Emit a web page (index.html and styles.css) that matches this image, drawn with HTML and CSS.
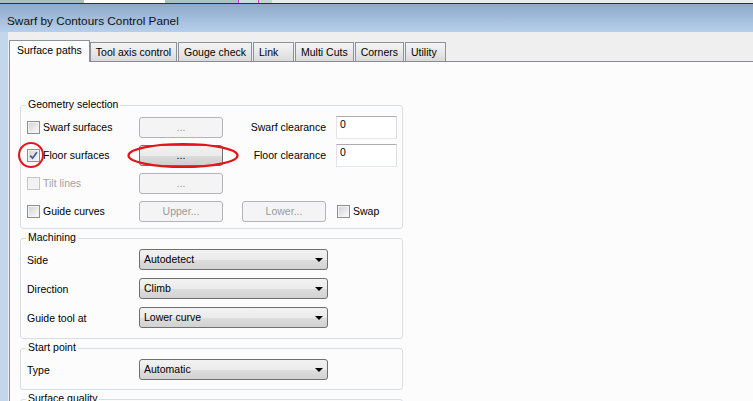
FILE: index.html
```html
<!DOCTYPE html>
<html lang="en">
<head>
  <meta charset="UTF-8">
  <meta name="viewport" content="width=device-width, initial-scale=1.0">
  <title>Swarf by Contours Control Panel</title>
  <link rel="stylesheet" href="styles.css">
</head>
<body>
  <div class="desktop-strip"></div>
  <div class="titlebar">Swarf by Contours Control Panel</div>

  <div class="window">
    <div class="frame"></div>
    <div class="client">
      <div class="tabs">
        <div class="tab active">Surface paths</div>
        <div class="tab">Tool axis control</div>
        <div class="tab">Gouge check</div>
        <div class="tab">Link</div>
        <div class="tab">Multi Cuts</div>
        <div class="tab">Corners</div>
        <div class="tab">Utility</div>
      </div>

      <div class="page">
        <!-- Geometry selection -->
        <div class="group geometry">
          <span class="legend">Geometry selection</span>
          <div class="geo-grid">
            <div class="check"><span class="box"></span>Swarf surfaces</div>
            <button class="btn">...</button>
            <span class="field-label">Swarf clearance</span>
            <div class="cell"><div class="textbox">0</div></div>

            <div class="check"><span class="box"><svg width="11" height="11" viewBox="0 0 11 11"><path d="M2.2 5.6 L4.6 8.2 L8.9 2.2" fill="none" stroke="#4a5e98" stroke-width="1.8"/></svg></span>Floor surfaces</div>
            <button class="btn btn-on">...</button>
            <span class="field-label">Floor clearance</span>
            <div class="cell"><div class="textbox">0</div></div>

            <div class="check disabled"><span class="box"></span>Tilt lines</div>
            <button class="btn">...</button>
            <span></span>
            <span></span>

            <div class="check"><span class="box"></span>Guide curves</div>
            <button class="btn">Upper...</button>
            <button class="btn btn-right">Lower...</button>
            <div class="cell cell-swap"><div class="check"><span class="box"></span>Swap</div></div>
          </div>
        </div>

        <!-- Machining -->
        <div class="group machining">
          <span class="legend">Machining</span>
          <div class="form-grid">
            <span>Side</span>
            <div class="combo">Autodetect</div>
            <span>Direction</span>
            <div class="combo">Climb</div>
            <span>Guide tool at</span>
            <div class="combo">Lower curve</div>
          </div>
        </div>

        <!-- Start point -->
        <div class="group start">
          <span class="legend">Start point</span>
          <div class="form-grid">
            <span>Type</span>
            <div class="combo">Automatic</div>
          </div>
        </div>

        <div class="group quality">
          <span class="legend">Surface quality</span>
        </div>
      </div>
    </div>
  </div>

  <!-- red markup drawn over the dialog -->
  <svg class="markup" width="753" height="401" viewBox="0 0 753 401">
    <circle cx="31" cy="155" r="12" fill="none" stroke="#e3151b" stroke-width="2"/>
    <ellipse cx="183" cy="155.5" rx="54.5" ry="11.5" fill="none" stroke="#e3151b" stroke-width="2.2"/>
  </svg>
</body>
</html>
```

FILE: styles.css
```css
body {
  margin: 0;
  width: 753px;
  height: 401px;
  overflow: hidden;
  position: relative;
  font-family: "Liberation Sans", Arial, sans-serif;
  font-size: 10.5px;
  color: #000;
  background-color: #f0f0f0;
}
.desktop-strip {
  height: 3px;
  border-bottom: 1px solid #2e3236;
  background: linear-gradient(to right, #a9bfbd 0 84px, #fff 84px 165px, #a9c1c0 165px 238px, #d63ad6 238px 239px, #c9dcdc 239px 258px, #d63ad6 258px 259px, #c2d5d3 259px 272px, #e9ecef 272px);
}
.titlebar {
  height: 28px;
  box-sizing: border-box;
  padding: 10px 0 0 7px;
  line-height: 15px;
  font-size: 11.8px;
  color: #111;
  background: linear-gradient(#8ea9ca, #a4bedc 55%, #b7cfea);
}
.window {
  display: flex;
  height: 369px;
}
.frame {
  width: 8px;
  background-color: #c3d6ec;
}
.client {
  flex: 1;
  padding-left: 1px;
  background-color: #efefef;
}

/* tabs */
.tabs {
  display: flex;
  align-items: flex-end;
  height: 29px;
  position: relative;
  z-index: 1;
}
.tab {
  height: 19px;
  min-width: 41px;
  box-sizing: border-box;
  border: 1px solid #8d9199;
  border-bottom: none;
  padding: 0 5px;
  margin-left: 1px;
  line-height: 18px;
  white-space: nowrap;
  background: linear-gradient(#f4f4f4, #e8e8e8 50%, #dadada);
}
.tab.active {
  height: 22px;
  margin: 0 -1px -1px 0;
  padding: 0 7px;
  background: #fcfcfc;
}

/* page */
.page {
  height: 100%;
  background-color: #fcfcfc;
  border-top: 1px solid #898c95;
  border-left: 1px solid #898c95;
  padding: 43px 0 0 10px;
}
.group {
  position: relative;
  width: 383px;
  box-sizing: border-box;
  border: 1px solid #d5dfe5;
  border-radius: 3px;
  padding: 10px 6px 6px;
  margin-bottom: 9px;
}
.group.machining {
  padding-bottom: 10px;
}
.group.start {
  padding-bottom: 9px;
}
.group.quality {
  height: 40px;
}
.legend {
  position: absolute;
  top: -8px;
  left: 5px;
  padding: 0 2px;
  line-height: 13px;
  background-color: #fcfcfc;
}

/* geometry grid */
.geo-grid {
  display: grid;
  grid-template-columns: 112px 84px 103px 71px;
  grid-auto-rows: 22px;
  row-gap: 6px;
  align-items: center;
}
.field-label {
  text-align: right;
}
.cell {
  padding-left: 10px;
}
.cell-swap {
  padding-left: 11px;
}
.check {
  display: flex;
  align-items: center;
  gap: 3px;
}
.box {
  width: 13px;
  height: 13px;
  box-sizing: border-box;
  border: 1px solid #8e8f8f;
  box-shadow: inset 0 0 0 1px #f3f3f3;
  background: linear-gradient(135deg, #cfd1d3, #f4f4f4 80%);
  display: flex;
}
.check.disabled {
  color: #a3a3a3;
}
.check.disabled .box {
  border-color: #c6c6c6;
  background: #f2f2f2;
}
.btn {
  width: 84px;
  height: 21px;
  box-sizing: border-box;
  border: 1px solid #b1b5b8;
  border-radius: 3px;
  padding: 0;
  font: inherit;
  color: #9a9a9a;
  background-color: #f4f4f4;
}
.btn-on {
  border-color: #707070;
  color: #000;
  background: linear-gradient(#f2f2f2, #ebebeb 50%, #dddddd 51%, #cfcfcf);
}
.btn-right {
  justify-self: end;
}
.textbox {
  width: 61px;
  height: 23px;
  box-sizing: border-box;
  border: 1px solid #abadb3;
  border-color: #abadb3 #dbdfe6 #e3e9ef #e2e3ea;
  padding: 1px 3px 0;
  line-height: 12px;
  background-color: #fff;
}

/* label + dropdown rows */
.form-grid {
  display: grid;
  grid-template-columns: 112px 189px;
  grid-auto-rows: 21px;
  row-gap: 8px;
  align-items: center;
}
.combo {
  position: relative;
  height: 21px;
  box-sizing: border-box;
  border: 1px solid #707070;
  border-radius: 3px;
  padding-left: 4px;
  line-height: 19px;
  background: linear-gradient(#f2f2f2, #ebebeb 50%, #dddddd 51%, #d2d2d2);
}
.combo::after {
  content: "";
  position: absolute;
  right: 4px;
  top: 8px;
  border-left: 4px solid transparent;
  border-right: 4px solid transparent;
  border-top: 4px solid #000;
}
.markup {
  position: absolute;
  top: 0;
  left: 0;
  pointer-events: none;
}
```
